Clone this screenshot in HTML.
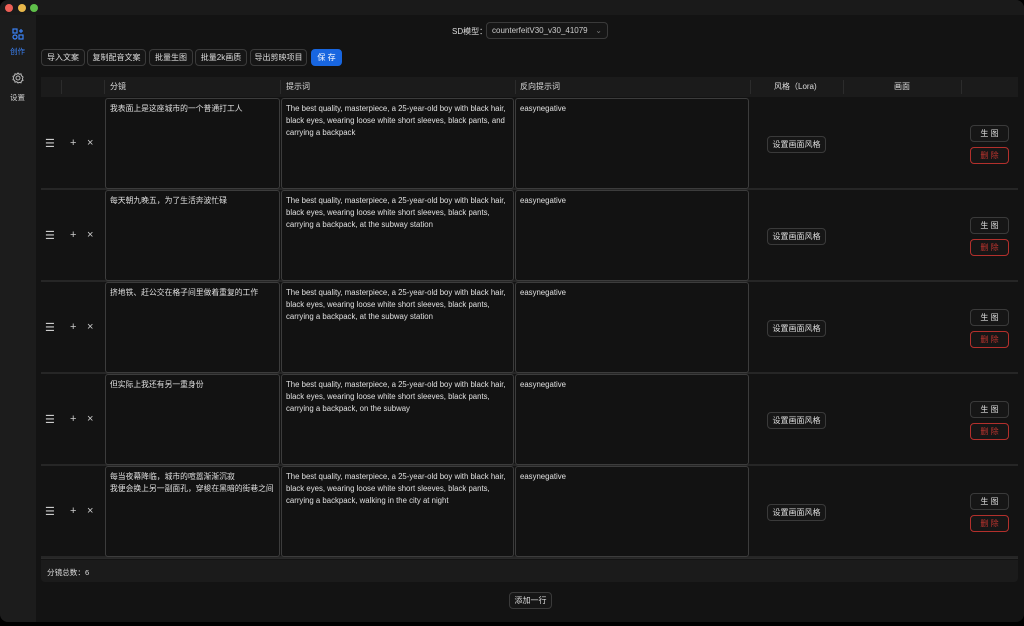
<!DOCTYPE html>
<html><head><meta charset="utf-8"><style>
*{box-sizing:border-box;margin:0;padding:0}
body{width:1024px;height:626px;background:#000;font-family:"Liberation Sans","Noto Sans CJK SC",sans-serif;color:#ddd;font-size:8px;position:relative;overflow:hidden}
.abs{position:absolute}
.win{position:absolute;left:0;top:0;width:1024px;height:622px;background:#131313;border-radius:8px;overflow:hidden}
.title{position:absolute;left:0;top:0;width:1024px;height:15px;background:#1a1a1a}
.side{position:absolute;left:0;top:15px;width:36px;height:607px;background:#1c1c1c}
.dot{position:absolute;top:4px;width:8px;height:8px;border-radius:50%}
.btn{position:absolute;height:17px;border:1px solid #3a3a3a;border-radius:4px;background:#161616;color:#ddd;font-size:8px;line-height:15px;text-align:center}
.cell{position:absolute;border:1px solid #3c3c3c;border-radius:3px;background:#121212;padding:4px;line-height:12px;font-size:7.8px;color:#e0e0e0}
.hd{position:absolute;top:77px;height:20px;line-height:20px;font-size:8px;color:#ddd}
.sep{position:absolute;top:80px;width:1px;height:14px;background:#2c2c2c}
.ic{position:absolute;font-size:11px;color:#ccc}
</style></head><body>
<div class="win">
<div class="title"></div>
<div class="dot" style="left:5px;background:#ed5f56"></div>
<div class="dot" style="left:18px;background:#e9b84a"></div>
<div class="dot" style="left:30px;background:#5fc04a"></div>
<div class="side"></div>
<svg class="abs" style="left:12px;top:28px" width="12" height="12" viewBox="0 0 12 12" fill="none" stroke="#3b82f6" stroke-width="1.2"><rect x="1" y="1" width="4" height="4"/><rect x="7" y="7" width="4" height="4"/><rect x="1" y="7" width="4" height="4" rx="2"/><path d="M9 1v4M7 3h4"/></svg>
<div class="abs" style="left:10px;top:46px;font-size:7.5px;color:#3b82f6">创作</div>
<svg class="abs" style="left:12px;top:72px" width="12" height="12" viewBox="0 0 12 12" fill="none" stroke="#bbb" stroke-width="1"><circle cx="6" cy="6" r="2"/><path d="M6 1l1.2 1.3 1.8-.4.4 1.8L11 5l-.6 1.7.6 1.7-1.6.6-.4 1.8-1.8-.4L6 11l-1.2-1.3-1.8.4-.4-1.8L1 7.7 1.6 6 1 4.3l1.6-.6.4-1.8 1.8.4z"/></svg>
<div class="abs" style="left:10px;top:92px;font-size:7.5px;color:#ccc">设置</div>

<div class="abs" style="left:452px;top:26px;font-size:8px">SD模型：</div>
<div class="btn" style="left:486px;top:22px;width:122px;height:17px;text-align:left;padding-left:5px;color:#ccc">counterfeitV30_v30_41079<span style="position:absolute;right:5px;color:#777">⌄</span></div>

<div class="btn" style="left:41px;top:49px;width:44px">导入文案</div>
<div class="btn" style="left:87px;top:49px;width:59px">复制配音文案</div>
<div class="btn" style="left:149px;top:49px;width:44px">批量生图</div>
<div class="btn" style="left:195px;top:49px;width:52px">批量2k画质</div>
<div class="btn" style="left:250px;top:49px;width:57px">导出剪映项目</div>
<div class="btn" style="left:311px;top:49px;width:31px;background:#1866e0;border-color:#1866e0;color:#fff">保 存</div>

<div class="abs" style="left:41px;top:77px;width:977px;height:20px;background:#1b1b1b"></div>
<div class="sep" style="left:61px"></div><div class="sep" style="left:104px"></div><div class="sep" style="left:280px"></div><div class="sep" style="left:515px"></div><div class="sep" style="left:750px"></div><div class="sep" style="left:843px"></div><div class="sep" style="left:961px"></div>
<div class="hd" style="left:110px">分镜</div>
<div class="hd" style="left:286px">提示词</div>
<div class="hd" style="left:520px">反向提示词</div>
<div class="hd" style="left:774px">风格（Lora)</div>
<div class="hd" style="left:894px">画面</div>

<div id="rows"></div>
<div class="abs" style="left:41px;top:558px;width:977px;height:1px;background:#2a2a2a"></div>
<div class="abs" style="left:41px;top:560px;width:977px;height:22px;background:#1b1b1b;border-radius:0 0 4px 4px"></div>
<div class="abs" style="left:47px;top:567px;font-size:7.6px">分镜总数：6</div>
<div class="btn" style="left:509px;top:592px;width:43px;height:17px">添加一行</div>
</div>
<script>
var d=[["我表面上是这座城市的一个普通打工人","The best quality, masterpiece, a 25-year-old boy with black hair, black eyes, wearing loose white short sleeves, black pants, and carrying a backpack"],
["每天朝九晚五，为了生活奔波忙碌","The best quality, masterpiece, a 25-year-old boy with black hair, black eyes, wearing loose white short sleeves, black pants, carrying a backpack, at the subway station"],
["挤地铁、赶公交在格子间里做着重复的工作","The best quality, masterpiece, a 25-year-old boy with black hair, black eyes, wearing loose white short sleeves, black pants, carrying a backpack, at the subway station"],
["但实际上我还有另一重身份","The best quality, masterpiece, a 25-year-old boy with black hair, black eyes, wearing loose white short sleeves, black pants, carrying a backpack, on the subway"],
["每当夜幕降临，城市的喧嚣渐渐沉寂<br>我便会换上另一副面孔，穿梭在黑暗的街巷之间","The best quality, masterpiece, a 25-year-old boy with black hair, black eyes, wearing loose white short sleeves, black pants, carrying a backpack, walking in the city at night"]];
var h="";
d.forEach(function(r,i){var y=98+i*92;
h+='<div class="abs" style="left:41px;top:'+(y+90)+'px;width:977px;height:2px;background:#262626"></div>';
h+='<div class="cell" style="left:105px;top:'+y+'px;width:175px;height:91px">'+r[0]+'</div>';
h+='<div class="cell" style="left:281px;top:'+y+'px;width:233px;height:91px">'+r[1]+'</div>';
h+='<div class="cell" style="left:515px;top:'+y+'px;width:234px;height:91px">easynegative</div>';
var c=y+47;
h+='<div class="ic" style="left:45px;top:'+(c-8)+'px">☰</div><div class="ic" style="left:70px;top:'+(c-8)+'px">+</div><div class="ic" style="left:87px;top:'+(c-8)+'px">×</div>';
h+='<div class="btn" style="left:767px;top:'+(c-9)+'px;width:59px">设置画面风格</div>';
h+='<div class="btn" style="left:970px;top:'+(c-20)+'px;width:39px">生 图</div>';
h+='<div class="btn" style="left:970px;top:'+(c+2)+'px;width:39px;border-color:#b3302c;color:#c0352f">删 除</div>';
});
document.getElementById("rows").outerHTML=h;
</script>
</body></html>
